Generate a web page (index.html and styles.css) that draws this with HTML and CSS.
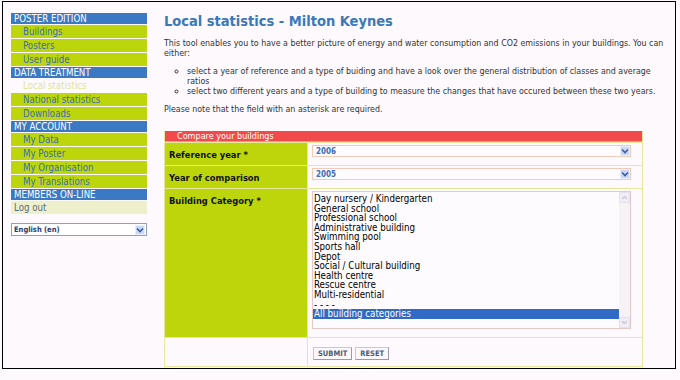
FILE: index.html
```html
<!DOCTYPE html>
<html>
<head>
<meta charset="utf-8">
<link rel="stylesheet" href="styles.css">
</head>
<body>
<div class="frame">
  <aside class="sidebar">
    <div class="sec">POSTER EDITION</div>
    <div class="item">Buildings</div>
    <div class="item">Posters</div>
    <div class="item">User guide</div>
    <div class="sec">DATA TREATMENT</div>
    <div class="item active">Local statistics</div>
    <div class="item">National statistics</div>
    <div class="item">Downloads</div>
    <div class="sec">MY ACCOUNT</div>
    <div class="item">My Data</div>
    <div class="item">My Poster</div>
    <div class="item">My Organisation</div>
    <div class="item">My Translations</div>
    <div class="sec">MEMBERS ON-LINE</div>
    <div class="item logout">Log out</div>
    <div class="lang">
      <span class="lang-text">English (en)</span>
      <span class="drop"><svg width="8" height="6" viewBox="0 0 8 6"><path d="M1 1.5 L4 4.5 L7 1.5" fill="none" stroke="#3a5a9a" stroke-width="1.6"/></svg></span>
    </div>
  </aside>
  <main class="main">
    <h1 class="title">Local statistics - Milton Keynes</h1>
    <p class="txt">This tool enables you to have a better picture of energy and water consumption and CO2 emissions in your buildings. You can either:</p>
    <ul class="bullets">
      <li>select a year of reference and a type of buiding and have a look over the general distribution of classes and average ratios</li>
      <li>select two different years and a type of building to measure the changes that have occured between these two years.</li>
    </ul>
    <p class="txt">Please note that the field with an asterisk are required.</p>

    <div class="form">
      <div class="form-head">Compare your buildings</div>
      <div class="row r1">
        <div class="lbl">Reference year *</div>
        <div class="val">
          <div class="sel"><span>2006</span><span class="drop"><svg width="8" height="6" viewBox="0 0 8 6"><path d="M1 1.5 L4 4.5 L7 1.5" fill="none" stroke="#3a5a9a" stroke-width="1.6"/></svg></span></div>
        </div>
      </div>
      <div class="row r1">
        <div class="lbl">Year of comparison</div>
        <div class="val">
          <div class="sel"><span>2005</span><span class="drop"><svg width="8" height="6" viewBox="0 0 8 6"><path d="M1 1.5 L4 4.5 L7 1.5" fill="none" stroke="#3a5a9a" stroke-width="1.6"/></svg></span></div>
        </div>
      </div>
      <div class="row r3">
        <div class="lbl">Building Category *</div>
        <div class="val">
          <div class="listbox">
            <div class="opts">
              <div>Day nursery / Kindergarten</div>
              <div>General school</div>
              <div>Professional school</div>
              <div>Administrative building</div>
              <div>Swimming pool</div>
              <div>Sports hall</div>
              <div>Depot</div>
              <div>Social / Cultural building</div>
              <div>Health centre</div>
              <div>Rescue centre</div>
              <div>Multi-residential</div>
              <div>- - - -</div>
              <div class="selected">All building categories</div>
            </div>
            <div class="scroll">
              <span class="sbtn"><svg width="7" height="5" viewBox="0 0 7 5"><path d="M1 4 L3.5 1.5 L6 4" fill="none" stroke="#c8c8d8" stroke-width="1.3"/></svg></span>
              <span class="sbtn"><svg width="7" height="5" viewBox="0 0 7 5"><path d="M1 1 L3.5 3.5 L6 1" fill="none" stroke="#c8c8d8" stroke-width="1.3"/></svg></span>
            </div>
          </div>
        </div>
      </div>
      <div class="row r4">
        <div class="lbl empty"></div>
        <div class="val btns">
          <button class="btn">SUBMIT</button>
          <button class="btn">RESET</button>
        </div>
      </div>
    </div>
  </main>
</div>
</body>
</html>
```
FILE: styles.css
```css
html, body {
  margin: 0;
  padding: 0;
  background: #fdf9fd;
}
body {
  font-family: "DejaVu Sans", "Liberation Sans", sans-serif;
  font-stretch: condensed;
  color: #222;
}
.frame {
  margin: 1px 0 0 2px;
  width: 664px;
  height: 355px;
  border: 1px solid #000;
  padding: 11px 0 0 8px;
  display: flex;
  align-items: flex-start;
  overflow: hidden;
}
.sidebar {
  width: 136px;
  flex: none;
  font-size: 9.6px;
}
.sec {
  background: #3b79c3;
  color: #fff;
  height: 11px;
  line-height: 12px;
  padding-left: 3px;
  border-bottom: 1px solid #fdf9fd;
}
.item {
  background: #bdd60c;
  color: #3a6cb0;
  height: 13px;
  line-height: 13px;
  padding-left: 12px;
  border-bottom: 1px solid #fdf9fd;
}
.item.active {
  background: transparent;
  color: #e2e492;
}
.item.logout {
  background: #eef0cc;
  color: #5a6a80;
  padding-left: 3px;
}
.lang {
  margin-top: 8px;
  height: 11px;
  border: 1px solid #8aa0c8;
  background: #fff;
  display: flex;
  align-items: center;
  justify-content: space-between;
  padding-left: 2px;
  font-size: 7.5px;
  font-weight: bold;
  color: #2a3a6a;
}
.drop {
  width: 10px;
  height: 10px;
  background: #c9d8f6;
  border: 1px solid #e8eefc;
  box-sizing: border-box;
  display: flex;
  align-items: center;
  justify-content: center;
  margin-right: 1px;
}
.main {
  margin-left: 17px;
  width: 505px;
  flex: none;
}
.title {
  margin: 0 0 9px 0;
  font-size: 14.5px;
  line-height: 16px;
  color: #3a78b8;
  font-weight: bold;
}
.txt {
  margin: 0 0 8px 0;
  font-size: 8.8px;
  line-height: 10px;
  color: #333;
}
.bullets {
  margin: 0 0 8px 0;
  padding-left: 23px;
  list-style: circle;
  font-size: 8.8px;
  line-height: 10px;
  color: #333;
}
.form {
  margin-top: 17px;
  width: 479px;
  border: 1px solid #e8e89c;
  border-top: none;
  box-sizing: border-box;
}
.form-head {
  background: #f24a4a;
  color: #fff;
  height: 10px;
  line-height: 11px;
  font-size: 9px;
  padding-left: 12px;
  border-bottom: 1px solid #f0a850;
}
.row {
  display: flex;
  border-top: 1px solid #e8e89c;
}
.lbl {
  width: 143px;
  flex: none;
  background: #bdd60c;
  border-right: 1px solid #e8e89c;
  font-weight: bold;
  font-size: 9.3px;
  color: #111;
  padding: 6px 0 0 4px;
  box-sizing: border-box;
}
.lbl.empty {
  background: #fdf9fd;
}
.val {
  flex: 1;
  padding: 2px 0 0 4px;
  box-sizing: border-box;
}
.r1 { height: 22px; }
.r3 { height: 148px; }
.r4 { height: 28px; }
.sel {
  width: 319px;
  height: 12px;
  border: 1px solid #f0ccb8;
  background: #fefbfe;
  display: flex;
  align-items: center;
  justify-content: space-between;
  font-size: 8px;
  font-weight: bold;
  color: #3a6cc0;
  padding-left: 3px;
  box-sizing: border-box;
}
.sel .drop {
  margin-right: 0;
  height: 10px;
}
.listbox {
  width: 319px;
  height: 138px;
  border: 1px solid #e6c8c8;
  box-sizing: border-box;
  background: #fefbfe;
  display: flex;
}
.opts {
  flex: 1;
  padding-top: 2px;
  font-size: 9.7px;
  line-height: 9.6px;
  color: #000;
}
.opts div {
  padding-left: 1px;
}
.opts .selected {
  background: #316ac5;
  color: #fff;
}
.scroll {
  width: 11px;
  background: #f6f2f6;
  display: flex;
  flex-direction: column;
  justify-content: space-between;
}
.sbtn {
  height: 11px;
  background: #f0eef4;
  border: 1px solid #e4e2ea;
  box-sizing: border-box;
  display: flex;
  align-items: center;
  justify-content: center;
}
.btns {
  padding: 9px 0 0 5px;
  display: flex;
  gap: 3px;
  align-items: flex-start;
}
.btn {
  font-family: inherit;
  font-stretch: condensed;
  font-size: 7.5px;
  font-weight: bold;
  color: #4a5a78;
  background: #fbf8fb;
  border: 1px solid #c8c8d4;
  border-right-color: #9a9aaa;
  border-bottom-color: #9a9aaa;
  height: 13px;
  padding: 0 4px;
  margin: 0;
  line-height: 11px;
}
```
